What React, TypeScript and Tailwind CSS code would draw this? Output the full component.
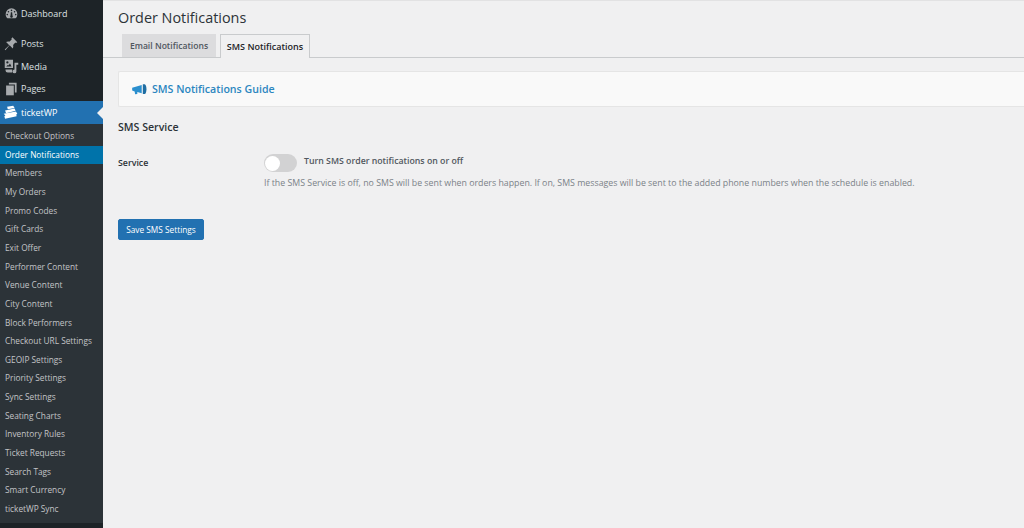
import React from "react";

const subItems = [
  "Checkout Options",
  "Order Notifications",
  "Members",
  "My Orders",
  "Promo Codes",
  "Gift Cards",
  "Exit Offer",
  "Performer Content",
  "Venue Content",
  "City Content",
  "Block Performers",
  "Checkout URL Settings",
  "GEOIP Settings",
  "Priority Settings",
  "Sync Settings",
  "Seating Charts",
  "Inventory Rules",
  "Ticket Requests",
  "Search Tags",
  "Smart Currency",
  "ticketWP Sync",
];

const DashIcon = () => (
  <svg width="13" height="13" viewBox="0 0 20 20" fill="#a7aaad">
    <path d="M10 2a9 9 0 0 0-9 9c0 2.600 1 4.800 2.700 6.400h12.600A8.900 8.900 0 0 0 19 11a9 9 0 0 0-9-9zm0 2a1.200 1.200 0 1 1 0 2.400A1.200 1.200 0 0 1 10 4zM5.300 6a1.200 1.200 0 1 1 0 2.400 1.200 1.200 0 0 1 0-2.400zm9.400 0a1.200 1.200 0 1 1 0 2.400 1.200 1.200 0 0 1 0-2.400zM3.500 10.500a1.200 1.200 0 1 1 0 2.400 1.200 1.200 0 0 1 0-2.400zm13 0a1.200 1.200 0 1 1 0 2.400 1.200 1.200 0 0 1 0-2.400zM11 8l.5 5.200a2 2 0 1 1-3 0L9 8z" fillRule="evenodd" />
  </svg>
);

const PinIcon = () => (
  <svg width="14" height="14" viewBox="0 0 20 20" fill="#a7aaad">
    <path d="M12 0.500l7 7-1.800 1-1-.5-3.200 3.500c.5 1.800.3 3.300-.5 4.800L8 11.800l-6 7-1-1 6.500-6L3 7.300c1.500-.8 3-1 4.500-.5L11 3.500l-.5-1z" />
  </svg>
);

const MediaIcon = () => (
  <svg width="15" height="15" viewBox="0 0 20 20" fill="#a7aaad">
    <path d="M1 1h11v11H1V1zm3.500 2a1.500 1.500 0 1 0 0 3 1.500 1.500 0 0 0 0-3zM3 10h7L8 6 6 8.800 5 8l-2 2z" fillRule="evenodd" />
    <path d="M14 5h5v2.500h-2.500v9a2.500 2.500 0 1 1-2.500-2.500V5zM2 14h9v4H5a3 3 0 0 1-3-3v-1z" />
  </svg>
);

const PagesIcon = () => (
  <svg width="14" height="14" viewBox="0 0 20 20" fill="#a7aaad">
    <path d="M7 1h11v14h-2.500V3.500H7V1z" />
    <path d="M3 5h11v14H3V5z" />
  </svg>
);

const TicketIcon = () => (
  <svg width="15" height="15" viewBox="0 0 22 20" fill="#ffffff">
    <path d="M6 1.500L15 0l2 3.500-10 1.800L6 1.500z" />
    <path d="M3 7l14-3 1.500 3.500L4.500 11 3 7z" />
    <path d="M1 12l18-3.500 2 3.500-1.500 1 .5 2.500-17 3.500-1-3.500 1.500-1L1 12z" />
  </svg>
);

const MegaphoneIcon = () => (
  <svg width="15" height="11" viewBox="0 0 20 15" fill="#2b8fce">
    <path d="M0 5L13 1.500v11L7 11v2.500l-3 .5-.6-3.900L0 9z" />
    <path d="M14.500 0.500h2.500c1.500 0 2.500 3 2.500 6.500s-1 6.500-2.500 6.500h-2.500z" fill="#1f6ea3" />
  </svg>
);

const TopItem = ({ icon, label }: { icon: React.ReactNode; label: string }) => (
  <div className="flex h-[22.500px] items-center text-[#dfe1e3]">
    <div className="flex w-[21px] shrink-0 justify-center pl-[1px]">{icon}</div>
    <span>{label}</span>
  </div>
);

export default function App() {
  return (
    <div className="flex h-[528px] w-[1024px] overflow-hidden bg-[#f0f0f1] font-['Open_Sans','Noto_Sans',sans-serif] text-[#3c434a]">
      <aside className="flex w-[103px] shrink-0 flex-col bg-[#1d2327] text-[9px]">
        <div className="pt-[2.500px]">
          <TopItem icon={<DashIcon />} label="Dashboard" />
        </div>
        <div className="mt-[7.500px]">
          <TopItem icon={<PinIcon />} label="Posts" />
          <TopItem icon={<MediaIcon />} label="Media" />
          <TopItem icon={<PagesIcon />} label="Pages" />
        </div>
        <div className="relative mt-[1px] flex h-[23px] items-center bg-[#2271b1] text-white">
          <div className="flex w-[21px] shrink-0 justify-center">
            <TicketIcon />
          </div>
          <span>ticketWP</span>
          <div className="absolute right-0 top-[6px] h-0 w-0 border-y-[6px] border-r-[6px] border-y-transparent border-r-[#f0f0f1]" />
        </div>
        <div className="bg-[#2c3338] pb-[5px] pt-[3px]">
          {subItems.map((item) => (
            <div
              key={item}
              className={
                item === "Order Notifications"
                  ? "flex h-[18.650px] items-center bg-[#0073aa] pl-[5px] text-[8.300px] text-white"
                  : "flex h-[18.650px] items-center pl-[5px] text-[8.300px] text-[#c3c4c7]"
              }
            >
              {item}
            </div>
          ))}
        </div>
      </aside>

      <main className="min-w-0 flex-1 border-t border-[#e2e2e3]">
        <div className="pl-[15px] pt-[7px]">
          <h1 className="text-[14.400px] leading-[20px] text-[#2c3338]">Order Notifications</h1>
        </div>
        <div className="mt-[6px] flex h-[24px] items-end gap-[4px] border-b border-[#c9cbcd] pl-[19px] text-[9px] font-semibold">
          <div className="flex h-[23px] w-[94px] items-center justify-center border border-b-0 border-[#dcdcde] bg-[#dcdcde] text-[8.600px] text-[#50575e]">
            Email Notifications
          </div>
          <div className="mb-[-1px] flex h-[24px] w-[90px] items-center justify-center border border-b-0 border-[#c9cbcd] bg-[#f0f0f1] text-[#1d2327]">
            SMS Notifications
          </div>
        </div>
        <div className="ml-[15px] mt-[13px] flex h-[36px] items-center rounded-l-[2px] border-y border-l border-[#e5e5e5] bg-[#f9f9f9] pl-[13px]">
          <MegaphoneIcon />
          <span className="ml-[5px] pt-[2px] text-[10.600px] font-semibold text-[#2b86c0]">SMS Notifications Guide</span>
        </div>
        <h2 className="ml-[15px] mt-[13px] text-[10.600px] font-semibold leading-[14px] text-[#2c3338]">SMS Service</h2>
        <div className="ml-[15px] mt-[18px] flex">
          <div className="w-[146px] pt-[5px] text-[8.800px] font-semibold text-[#2c3338]">Service</div>
          <div>
            <div className="flex items-center">
              <div className="mt-[2px] flex h-[18px] w-[33px] items-center rounded-full bg-[#d2d2d3] pl-[1px]">
                <div className="h-[15px] w-[15px] rounded-full bg-white" />
              </div>
              <span className="ml-[7px] text-[8.750px] font-semibold text-[#50575e]">Turn SMS order notifications on or off</span>
            </div>
            <p className="mt-[5px] whitespace-nowrap text-[8.800px] leading-[13px] text-[#7b8288]">
              If the SMS Service is off, no SMS will be sent when orders happen. If on, SMS messages will be sent to the added phone numbers when the schedule is enabled.
            </p>
          </div>
        </div>
        <button className="ml-[15px] mt-[29px] flex h-[21px] w-[86px] items-center justify-center rounded-[2px] border border-[#2271b1] bg-[#2271b1] pt-[1px] text-[8.300px] font-medium text-white">
          Save SMS Settings
        </button>
      </main>
    </div>
  );
}
